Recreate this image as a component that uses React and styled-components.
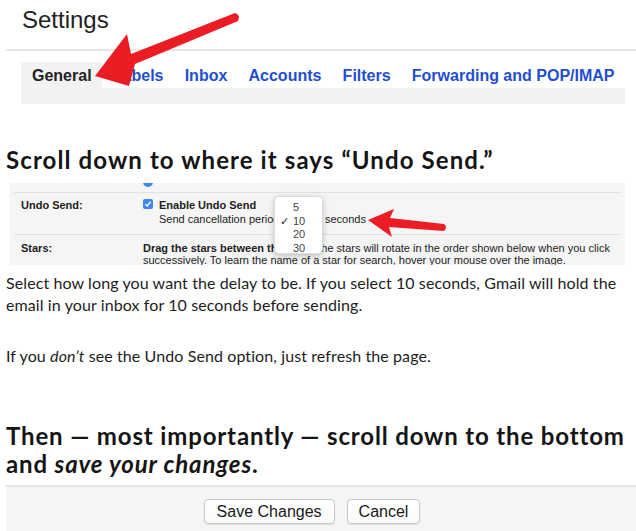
import React from "react";
import styled, { createGlobalStyle } from "styled-components";

const GlobalStyle = createGlobalStyle`
  html, body {
    margin: 0;
    padding: 0;
    background: #fff;
  }
`;

const Page = styled.div`
  width: 636px;
  height: 531px;
  position: relative;
  overflow: hidden;
  font-family: Lato, "Liberation Sans", sans-serif;
  color: #1b1b1b;
`;

const gmailFont = `"Liberation Sans", Arial, sans-serif`;

// ---- top screenshot (settings tabs)
const TopShot = styled.div`
  position: relative;
`;

const GmailTitle = styled.div`
  font-family: ${gmailFont};
  font-size: 24px;
  line-height: 28px;
  color: #222;
  padding: 6px 0 15px 22px;
`;

const Rule = styled.div`
  height: 2px;
  margin-left: 6px;
  background: #e6e6e6;
`;

const TabBox = styled.div`
  margin: 11px 11px 0 21px;
  background: #f2f2f2;
`;

const TabRow = styled.div`
  display: flex;
  height: 26px;
`;

const Tab = styled.div`
  flex-shrink: 0;
  white-space: nowrap;
  font-family: ${gmailFont};
  font-weight: 700;
  font-size: 16px;
  line-height: 24px;
  padding: 2px 10.6px 0 ${(p) => (p.active ? 11 : 10.6)}px;
  color: ${(p) => (p.active ? "#222" : "#1f4fcf")};
  background: ${(p) => (p.active ? "transparent" : "#fff")};
`;

const TabFill = styled.div`
  flex: 1;
  background: #fff;
`;

const TabStrip = styled.div`
  height: 16px;
`;

const Overlay = styled.svg`
  position: absolute;
  left: 0;
  top: 0;
  pointer-events: none;
`;

// ---- article text
const Heading = styled.h2`
  margin: ${(p) => p.margin || "0"};
  padding-left: 6px;
  font-size: 24px;
  line-height: 28px;
  font-weight: 700;
  color: #151515;
  letter-spacing: ${(p) => p.spacing || 1}px;

  em {
    font-style: italic;
  }
`;

const Para = styled.p`
  margin: ${(p) => p.margin || "0"};
  padding-left: 6px;
  font-size: 16px;
  line-height: 22px;
  letter-spacing: 0.1px;
  color: #1d1d1d;
`;

// ---- gmail settings panel
const Panel = styled.div`
  position: relative;
  margin: 9px 11px 0 10px;
  height: 82px;
  overflow: hidden;
  background: #f5f5f5;
  padding: 0 3px 0 4px;
  font-family: ${gmailFont};
  font-size: 11px;
  color: #222;
`;

const PanelTop = styled.div`
  height: 9px;
  overflow: hidden;
  padding-left: 129px;
`;

const Radio = styled.div`
  width: 10px;
  height: 10px;
  margin-top: -6px;
  border-radius: 50%;
  background: #3b87f5;
`;

const SettingRow = styled.div`
  display: grid;
  grid-template-columns: 122px 1fr;
  border-top: 1px solid #e2e2e2;
  padding: ${(p) => p.pad || "5px 0 8px 7px"};
  line-height: ${(p) => p.lh || "14px"};
`;

const Label = styled.div`
  font-weight: 700;
`;

const OptionLine = styled.div`
  display: flex;
  align-items: flex-start;
`;

const Checkbox = styled.div`
  width: 10px;
  height: 10px;
  margin: 1px 6px 0 0;
  border-radius: 2px;
  background: #3b87f5;
  display: flex;
  align-items: center;
  justify-content: center;
`;

const Indent = styled.div`
  display: flex;
  padding-left: 16px;
  white-space: nowrap;
`;

const PeriodText = styled.span`
  width: 166px;
  overflow: hidden;
`;

const Dropdown = styled.div`
  position: absolute;
  left: 264px;
  top: 13px;
  width: 49px;
  height: 58px;
  background: #fff;
  border: 1px solid #dcdcdc;
  border-radius: 5px;
  box-shadow: 0 2px 6px rgba(0, 0, 0, 0.22);
  padding-top: 3px;
  box-sizing: border-box;
  color: #444;
`;

const DropItem = styled.div`
  position: relative;
  height: 13.7px;
  line-height: 14px;
  padding-left: 18px;
`;

const Check = styled.span`
  position: absolute;
  left: 5px;
  top: 0;
  color: #222;
  font-size: 11px;
`;

// ---- save bar
const SaveBar = styled.div`
  margin: 7px 0 0 6px;
  height: 46px;
  background: #f5f5f5;
  border-top: 2px solid #e4e4e4;
  display: flex;
  justify-content: center;
  gap: 12px;
  padding: 12px 18px 0 0;
  box-sizing: border-box;
`;

const Button = styled.button`
  height: 25px;
  padding: 0 ${(p) => p.px || 12}px;
  background: linear-gradient(#fff, #fafafa);
  border: 1px solid #c6c6c6;
  border-radius: 4px;
  font-family: ${gmailFont};
  font-size: 16px;
  color: #1a1a1a;
  box-shadow: 0 1px 1px rgba(0, 0, 0, 0.08);
`;

const dropValues = ["5", "10", "20", "30"];

export default function App() {
  return (
    <Page>
      <GlobalStyle />
      <TopShot>
        <GmailTitle>Settings</GmailTitle>
        <Rule />
        <TabBox>
          <TabRow>
            <Tab active>General</Tab>
            <Tab>Labels</Tab>
            <Tab>Inbox</Tab>
            <Tab>Accounts</Tab>
            <Tab>Filters</Tab>
            <Tab>Forwarding and POP/IMAP</Tab>
            <TabFill />
          </TabRow>
          <TabStrip />
        </TabBox>
        <Overlay width="260" height="110" viewBox="0 0 260 110">
          <path
            d="M95,76 L127,34 L131,54 L235,13 Q241,15 238,21 L135,64 L129,86 Z"
            fill="#ec1c24"
          />
        </Overlay>
      </TopShot>

      <Heading margin="42px 0 0 0" spacing={1.1}>
        Scroll down to where it says “Undo Send.”
      </Heading>

      <Panel>
        <PanelTop>
          <Radio />
        </PanelTop>
        <SettingRow>
          <Label>Undo Send:</Label>
          <div>
            <OptionLine>
              <Checkbox>
                <svg width="8" height="8" viewBox="0 0 8 8">
                  <path
                    d="M1.5,4.2 L3.3,6 L6.6,1.8"
                    stroke="#fff"
                    strokeWidth="1.4"
                    fill="none"
                  />
                </svg>
              </Checkbox>
              <b>Enable Undo Send</b>
            </OptionLine>
            <Indent>
              <PeriodText>Send cancellation period:</PeriodText>
              <span>seconds</span>
            </Indent>
          </div>
        </SettingRow>
        <SettingRow pad="7px 0 0 7px" lh="12px">
          <Label>Stars:</Label>
          <div>
            <b>Drag the stars between the lists.</b> The stars will rotate in
            the order shown below when you click
            <br />
            successively. To learn the name of a star for search, hover your
            mouse over the image.
          </div>
        </SettingRow>
        <Dropdown>
          {dropValues.map((v) => (
            <DropItem key={v}>
              {v === "10" && <Check>✓</Check>}
              {v}
            </DropItem>
          ))}
        </Dropdown>
        <Overlay width="615" height="82" viewBox="10 183 615 82">
          <path
            d="M368,220 L394,209 L390,218 L444,224 Q448,227 444,231 L389,227 L392,237 Z"
            fill="#ec1c24"
          />
        </Overlay>
      </Panel>

      <Para margin="7px 0 0 0">
        Select how long you want the delay to be. If you select 10 seconds,
        Gmail will hold the email in your inbox for 10 seconds before sending.
      </Para>
      <Para margin="29px 0 0 0">
        If you <em>don’t</em> see the Undo Send option, just refresh the page.
      </Para>

      <Heading margin="55px 0 0 0" spacing={0.85}>
        Then — most importantly — scroll down to the bottom and{" "}
        <em>save your changes</em>.
      </Heading>

      <SaveBar>
        <Button px={12}>Save Changes</Button>
        <Button px={11}>Cancel</Button>
      </SaveBar>
    </Page>
  );
}
